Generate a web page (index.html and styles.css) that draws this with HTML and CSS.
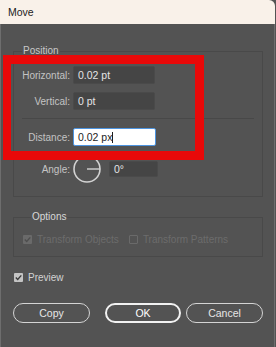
FILE: index.html
```html
<!DOCTYPE html>
<html lang="en">
<head>
    <meta charset="UTF-8">
    <meta name="viewport" content="width=device-width, initial-scale=1.0">
    <title>Move</title>
    <link rel="stylesheet" href="styles.css">
</head>
<body>
    <div class="dialog">
        <div class="titlebar">Move</div>

        <div class="dialog-body">
            <fieldset class="group group-position">
                <legend>Position</legend>
                <div class="field-row">
                    <span class="field-label">Horizontal:</span>
                    <span class="num-field">0.02 pt</span>
                </div>
                <div class="field-row">
                    <span class="field-label">Vertical:</span>
                    <span class="num-field">0 pt</span>
                </div>
                <div class="divider"></div>
                <div class="field-row">
                    <span class="field-label">Distance:</span>
                    <span class="num-field num-active">0.02 px<span class="caret"></span></span>
                </div>
                <div class="field-row angle-row">
                    <span class="field-label">Angle:</span>
                    <svg class="dial" width="28" height="28" viewBox="0 0 28 28">
                        <circle cx="14" cy="14" r="13" fill="none" stroke="#d2d2d2" stroke-width="1.6"/>
                        <line x1="14" y1="14" x2="27" y2="14" stroke="#d2d2d2" stroke-width="1.4"/>
                    </svg>
                    <span class="num-field num-short">0°</span>
                </div>
            </fieldset>

            <fieldset class="group group-options">
                <legend>Options</legend>
                <div class="check-row">
                    <span class="check check-disabled checked">
                        <svg width="9" height="9" viewBox="0 0 9 9"><path d="M1.8 4.6 L3.7 6.5 L7.3 2.4" fill="none" stroke="#4e4e4e" stroke-width="1.4"/></svg>
                    </span>
                    <span class="check-text disabled">Transform Objects</span>
                    <span class="check check-disabled check-empty"></span>
                    <span class="check-text disabled">Transform Patterns</span>
                </div>
            </fieldset>

            <div class="check-row preview-row">
                <span class="check checked">
                    <svg width="9" height="9" viewBox="0 0 9 9"><path d="M1.8 4.6 L3.7 6.5 L7.3 2.4" fill="none" stroke="#3a3a3a" stroke-width="1.4"/></svg>
                </span>
                <span class="check-text">Preview</span>
            </div>

            <div class="buttons">
                <button class="pill-button">Copy</button>
                <div class="button-group">
                    <button class="pill-button primary">OK</button>
                    <button class="pill-button">Cancel</button>
                </div>
            </div>
        </div>

        <div class="highlight"></div>
    </div>
</body>
</html>
```

FILE: styles.css
```css
* {
    margin: 0;
    padding: 0;
    box-sizing: border-box;
}

body {
    font-family: "Liberation Sans", Arial, sans-serif;
    font-size: 10px;
    background-color: #535353;
    color: #c8c8c8;
}

.dialog {
    position: relative;
    width: 275px;
    height: 347px;
    background: #535353;
}

.titlebar {
    height: 24px;
    line-height: 24px;
    padding-left: 8px;
    background: #f9f1e9;
    color: #1c1c1c;
    font-size: 10.5px;
    border-top-right-radius: 6px;
}

.dialog-body {
    height: 323px;
    padding: 21px 10px 0 12px;
    border-left: 1px solid #6e6e6e;
    border-right: 1px solid #6e6e6e;
}

.group {
    border: 1px solid #494949;
    width: 250px;
    padding: 0;
}

.group legend {
    margin-left: 8px;
    padding: 0 1px;
    line-height: 12px;
    font-size: 10px;
    color: #c8c8c8;
}

.group-position {
    padding: 9px 0 13px;
}

.field-row {
    display: flex;
    align-items: center;
    gap: 3px;
    height: 18px;
    margin-bottom: 8px;
}

.field-label {
    width: 56px;
    text-align: right;
    color: #c4c4c4;
}

.num-field {
    display: flex;
    align-items: center;
    width: 82px;
    height: 18px;
    padding-left: 4px;
    background: #454545;
    border: 1px solid #4a4a4a;
    border-radius: 2px;
    color: #e4e4e4;
    font-size: 10.5px;
}

.num-active {
    width: 83px;
    background: #ffffff;
    border-color: #4d94e0;
    color: #1e1e1e;
}

.caret {
    display: inline-block;
    width: 1px;
    height: 11px;
    background: #1e1e1e;
}

.divider {
    height: 1px;
    margin: 0 8px 9px;
    background: #484848;
}

.angle-row {
    height: 28px;
    margin: 9px 0 0;
}

.dial {
    display: block;
}

.num-short {
    width: 49px;
    height: 16px;
    margin-left: 5px;
}

.group-options {
    margin-top: 14px;
    padding: 10px 0 11px 9px;
}

.group-options legend {
    color: #d8d8d8;
}

.check-row {
    display: flex;
    align-items: center;
    height: 12px;
}

.check {
    display: flex;
    align-items: center;
    justify-content: center;
    width: 9px;
    height: 9px;
    border-radius: 1px;
    background: #c4c4c4;
}

.check-disabled {
    background: #6a6a6a;
}

.check-empty {
    background: none;
    border: 1px solid #6a6a6a;
    margin-left: 10px;
}

.check-text {
    margin-left: 5px;
    color: #d2d2d2;
}

.check-text.disabled {
    color: #6c6c6c;
}

.preview-row {
    margin: 14px 0 0 1px;
}

.buttons {
    display: flex;
    justify-content: space-between;
    width: 250px;
    margin-top: 20px;
}

.button-group {
    display: flex;
    gap: 5px;
}

.pill-button {
    width: 77px;
    height: 20px;
    border: 1.5px solid #d4d4d4;
    border-radius: 10px;
    background: none;
    color: #e6e6e6;
    font-family: "Liberation Sans", Arial, sans-serif;
    font-size: 10.5px;
    cursor: pointer;
}

.pill-button.primary {
    width: 76px;
    border: 2px solid #f2f2f2;
    color: #ffffff;
}

.highlight {
    position: absolute;
    left: 3px;
    top: 55px;
    width: 201px;
    height: 105px;
    border: 9px solid #e80909;
    border-left-width: 8px;
    pointer-events: none;
}
```
